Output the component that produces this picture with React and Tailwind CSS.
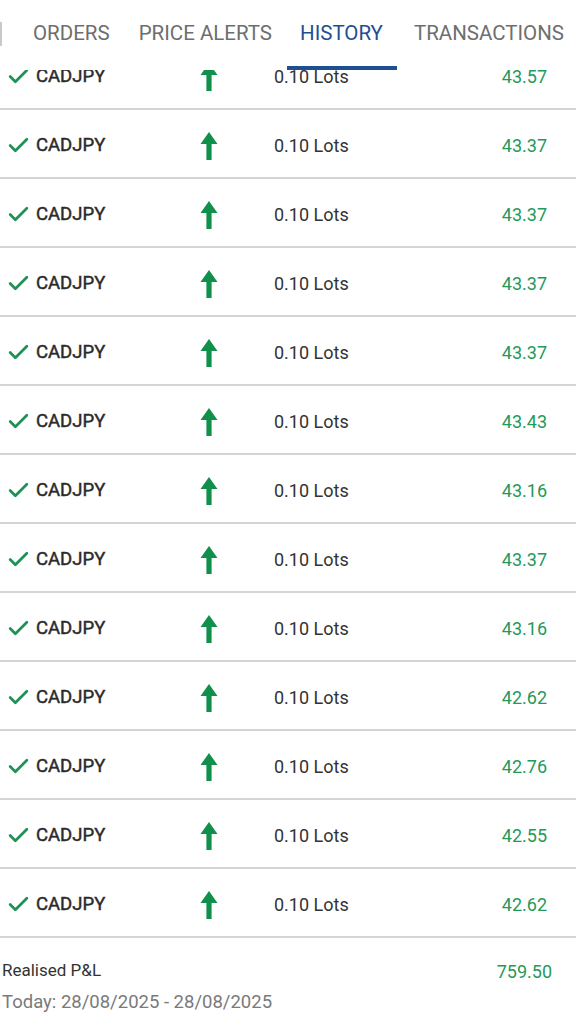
import { Check } from 'lucide-react'

const TABS = [
  { label: 'ORDERS', ml: 'ml-[33px]' },
  { label: 'PRICE ALERTS', ml: 'ml-[29px]' },
  { label: 'HISTORY', ml: 'ml-[28px]', active: true },
  { label: 'TRANSACTIONS', ml: 'ml-[31px]' },
]

const VALUES = ['43.57', '43.37', '43.37', '43.37', '43.37', '43.43', '43.16', '43.37', '43.16', '42.62', '42.76', '42.55', '42.62']

function UpArrow() {
  return (
    <svg width="20" height="30" viewBox="0 0 20 30" className="text-[#10904a] shrink-0">
      <path d="M10 1 L18.5 13 L12.6 13 L12.6 29 L7.4 29 L7.4 13 L1.5 13 Z" fill="currentColor" />
    </svg>
  )
}

function Row({ value }) {
  return (
    <div className="h-[69px] pt-[4px] flex items-center border-b-2 border-[#d4d4d4] text-[18px]">
      <Check size={25} strokeWidth={2.6} className="ml-[6px] text-[#1f9156] shrink-0" />
      <span className="ml-[5px] w-[163px] text-[18.5px] text-[#2b2b2b] [-webkit-text-stroke:0.45px_#2b2b2b]">CADJPY</span>
      <UpArrow />
      <span className="ml-[55px] text-[#333]">0.10 Lots</span>
      <span className="ml-auto mr-[29px] text-[#24995a]">{value}</span>
    </div>
  )
}

export default function App() {
  return (
    <div className="relative h-[1024px] w-[576px] overflow-hidden bg-white" style={{ fontFamily: 'Roboto, "Liberation Sans", sans-serif' }}>
      <div className="absolute top-0 left-0 right-0 h-[70px] bg-white z-10">
        <div className="flex items-center h-[66px] relative">
          <span className="absolute left-0 top-[22px] w-[2px] h-[24px] bg-[#c9c9c9]" />
          {TABS.map(t => (
            <span key={t.label} className={`${t.ml} whitespace-nowrap text-[20.5px] ${t.active ? 'text-[#1e4f91]' : 'text-[#6e6e6e]'}`}>
              {t.label}
            </span>
          ))}
        </div>
        <div className="ml-[287px] w-[110px] h-[4px] bg-[#1e4f91]" />
      </div>

      <div className="pt-[41px]">
        {VALUES.map((v, i) => <Row key={i} value={v} />)}
        <div className="pl-[2px] pr-[24px] pt-[20px]">
          <div className="flex justify-between text-[17px]">
            <span className="text-[#333]">Realised P&amp;L</span>
            <span className="text-[#24995a] text-[18px]">759.50</span>
          </div>
          <div className="mt-[4px] text-[18.5px] text-[#7a7a7a]">Today: 28/08/2025 - 28/08/2025</div>
        </div>
      </div>
    </div>
  )
}
